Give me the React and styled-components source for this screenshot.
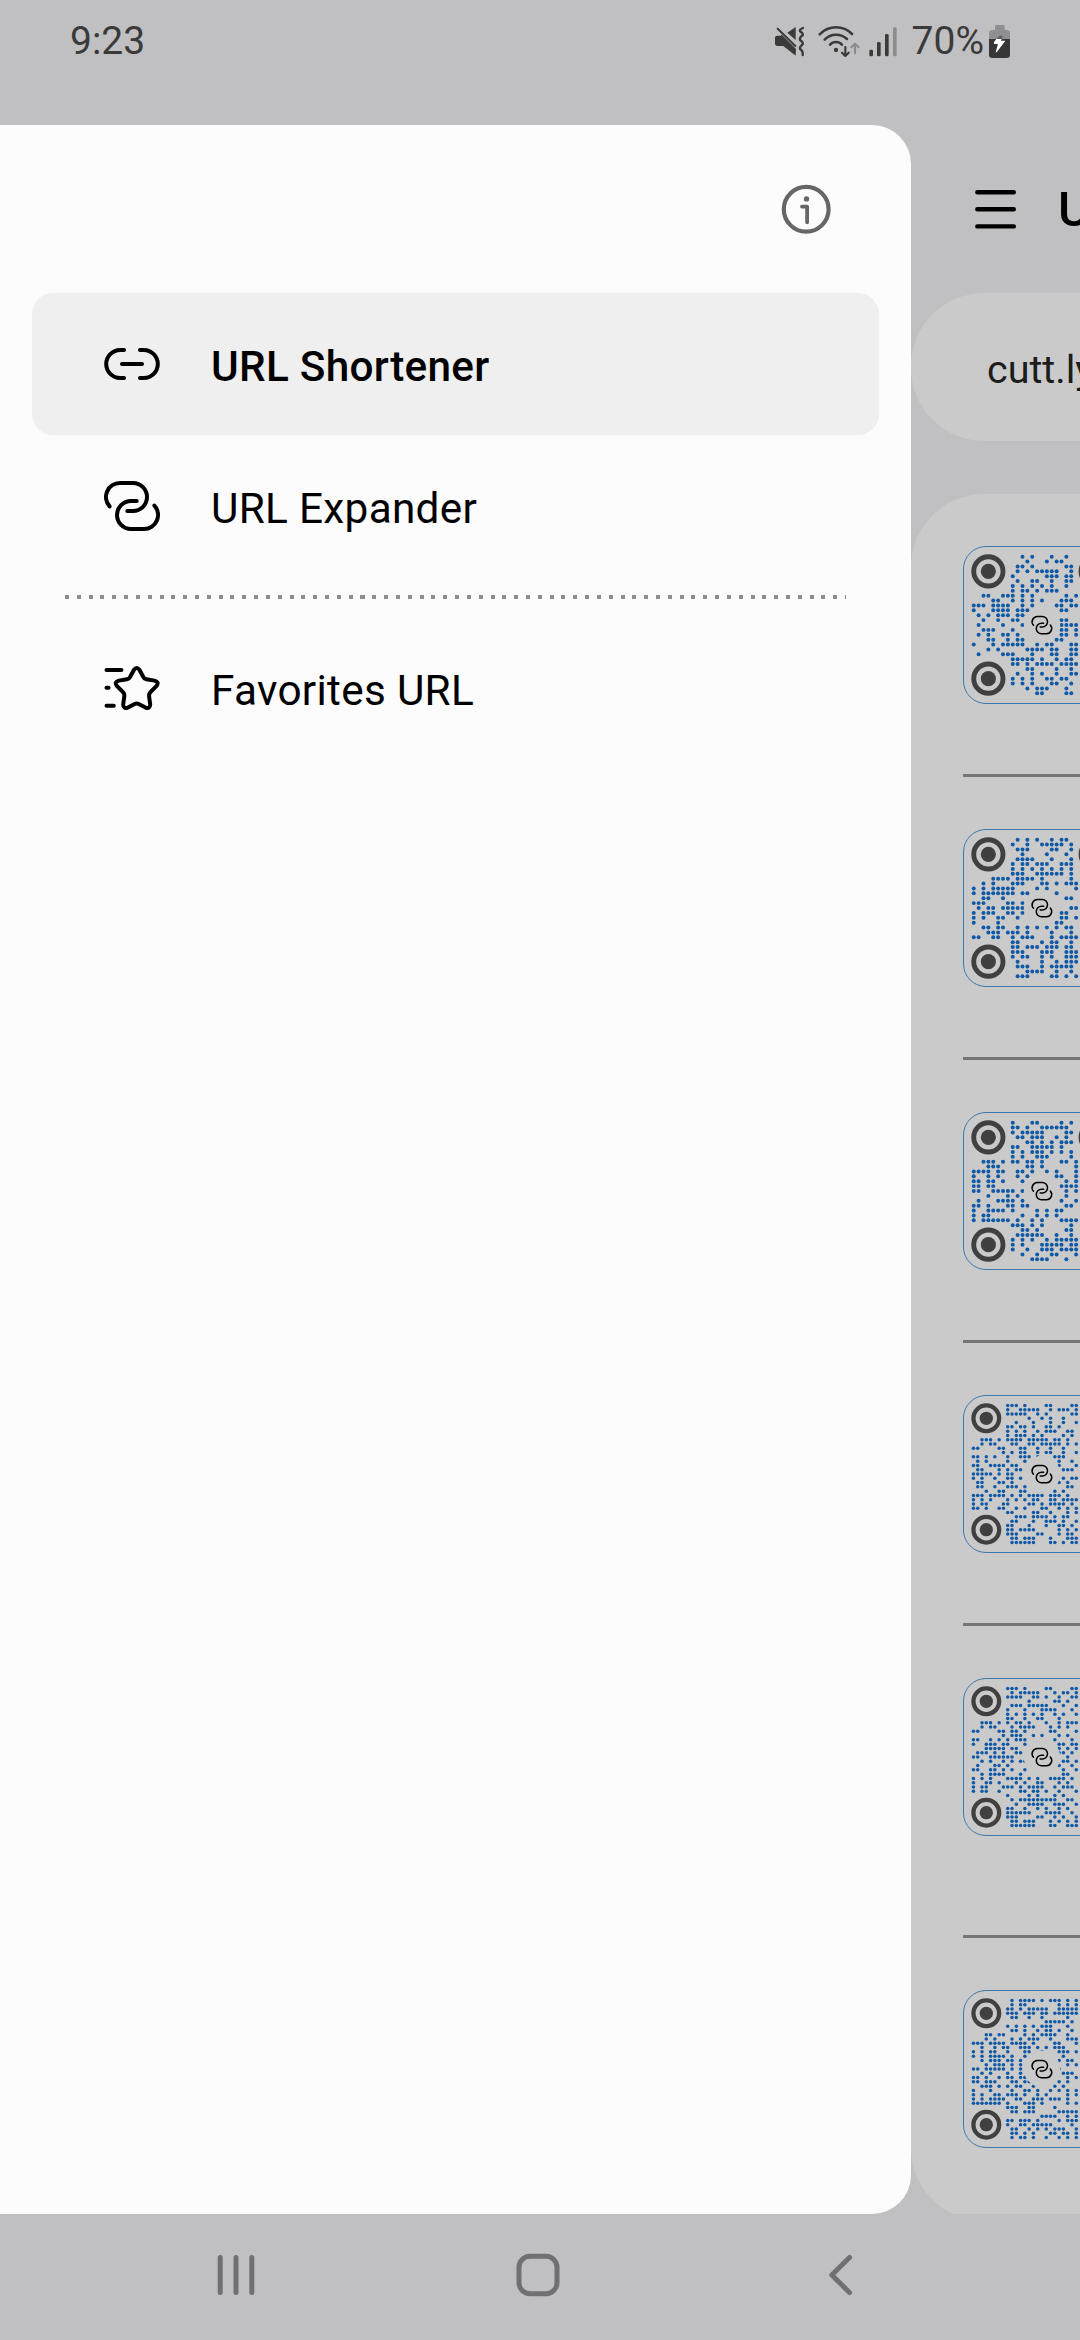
import React from "react";
import styled, { createGlobalStyle } from "styled-components";

const GlobalStyle = createGlobalStyle`
  *, *::before, *::after { box-sizing: border-box; }
  html, body { margin: 0; padding: 0; background: #c0c0c2; }
  body { font-family: Roboto, "Liberation Sans", sans-serif; overflow: hidden; }
  svg { display: block; flex: none; }
`;

const Screen = styled.div`
  display: flex;
  flex-direction: column;
  width: 1080px;
  height: 2340px;
  overflow: hidden;
  background: #c0c0c2;
`;

const StatusBar = styled.header`
  display: flex;
  justify-content: space-between;
  align-items: flex-start;
  flex: none;
  height: 125px;
  padding: 17px 70px 0 70px;
  color: #3a3a3a;
`;

const StatusText = styled.span`
  margin-right: ${(p) => p.$right || 0}px;
  font-size: 39px;
  line-height: 48px;
`;

const StatusIcons = styled.div`
  display: flex;
  align-items: flex-start;
  height: 48px;
`;

const IconSlot = styled.span`
  display: block;
  margin: ${(p) => p.$top}px ${(p) => p.$right}px 0 0;
`;

const Body = styled.div`
  display: flex;
  flex: none;
  height: 2089px;
  overflow: hidden;
`;

const Drawer = styled.nav`
  display: flex;
  flex-direction: column;
  flex: none;
  width: 911px;
  background: #fcfcfc;
  border-radius: 0 39px 39px 0;
`;

const DrawerHeader = styled.div`
  display: flex;
  justify-content: flex-end;
  align-items: center;
  height: 168px;
  padding-right: 80px;
`;

const DrawerItem = styled.a`
  display: flex;
  align-items: center;
  gap: 51px;
  height: 142px;
  margin: 0 32px;
  padding-left: 72px;
  border-radius: 21px;
  background: ${(p) => (p.$active ? "#efefef" : "transparent")};
  color: #000;
  font-size: 42.3px;
  font-weight: ${(p) => (p.$active ? 500 : 400)};
  line-height: 50px;
  letter-spacing: 0.3px;
`;

const ItemLabel = styled.span`
  padding-top: 5px;
`;

const DottedDivider = styled.div`
  height: 4px;
  margin: 18px 65px;
  background: repeating-linear-gradient(90deg, #8d8d8d 0 4px, transparent 4px 11.82px);
`;

const Main = styled.main`
  display: flex;
  flex-direction: column;
  flex: none;
  width: 1080px;
`;

const MainHeader = styled.div`
  display: flex;
  align-items: center;
  gap: 41px;
  flex: none;
  height: 168px;
  padding-left: 64px;
`;

const Title = styled.h1`
  margin: 0;
  padding-top: 2px;
  color: #000;
  font-size: 49px;
  font-weight: 500;
  line-height: 60px;
`;

const ServicePicker = styled.div`
  display: flex;
  align-items: center;
  flex: none;
  height: 148px;
  margin-bottom: 53px;
  padding: 5px 0 0 76px;
  border-radius: 73px;
  background: #cacaca;
  color: #1c1c1c;
  font-size: 39.5px;
  line-height: 48px;
`;

const List = styled.section`
  flex: 1;
  padding-left: 52px;
  border-radius: 73px;
  background: #cacaca;
`;

const ListRow = styled.article`
  height: ${(p) => (p.$tall ? 312 : 283)}px;
  padding-top: 52px;
  border-bottom: ${(p) => (p.$last ? "0" : "3px solid #757575")};
`;

const QrCard = styled.div`
  width: 158px;
  height: 158px;
  border: 1px solid #3f77b0;
  border-radius: 23px;
`;

const NavBar = styled.footer`
  display: flex;
  align-items: flex-start;
  flex: none;
  height: 126px;
  padding: 39px 0 0 215px;
`;

const NavButton = styled.span`
  display: block;
  width: ${(p) => p.$width}px;
`;

/* Dot positions per row of each code; "a-b" is a run of columns. */
const CODES = [
  {
    size: 29,
    rows: "10 12 16 19|11 15 17 18|9 10 12 19 20|9 11 13-17 20|8 15-17 19 20|9 12 13 16 19 20|8 10 12 14 16 19|8 10 11 13 15-17|2 3 6-8 10 12 19 21|4 5 8 10 12 14 18-20|0-2 4-7 10 12 17 18 20 21|0 4-7 9-11 18 19|1 3 5-7 9 10|2 5 8 9 18 19|1 6 10 18-21|2-4 8 18 19 21|1 3 6 7 9 18 19 21|3 4 7 9 10 17 18|0 4 6-10 13 15 16 20 21|3 5 11-14 16 17 20 21|1 6-8 12 16 17 20 21|8-12 14 17 19 20|8 9 11 13-16 18-21|11 12 17 20|9 12 14 17 20 21|8 10 12 15 16 18 19|8 10 12 16 17 20|11 13-15 19|13 14 19 20",
  },
  {
    size: 29,
    rows: "9 11 13 16 18 19|8 11 14-18 20|9-11 16 17 20|10 15 19|9-12 16 20|8 10 11 13-15 18-20|8 10 12 14 16 18 20|8-10 13-18 20|4-7 9-12 14 20|2 4 8-10 14 15 17 19-21|0 2 4-8 13 15 21|0 2-8 10 11 17|2 3 6 19 20|0-2 7 8 10|1 3 4 6-10 20 21|0 2-4 7 8 10 18 19|0 2 5 6 9 18 19 21|0 5 17 18|2 3 5 6 9 11 13 15 17 19 20|3-5 7-9 11 16 20|0 1 4 5 8 10-12 16 18-21|8 9 14 16 17 20|8 9 11-13 15-17 19 20|8-10 14-16 19-21|8 10 11 14 16 19-21|9 14 17 19-21|9-11 14 16-20|11-14 17 20|9-11 16 17 19 21",
  },
  {
    size: 29,
    rows: "8 12 13 18 20|8 9 11 14-19|8 10-14 19 20|9 10 12-14 17 19|11 12 14 16 18-20|8 9 12-16 18|8 10 12-14 16 18 20|8 10 13-15 20|2-4 6 8 9 11 12 14 18 19 21|3-5 11 12 14 21|0-3 5 6 9 10 12 15 17 21|0 3 5 9 11 17 18 21|0 1 3 4 6 10 19 21|0 1 3 4 18-21|0 1 4-8 10 19 21|3 7 9 19|1 5-8 10 18 21|0 1 3 7 8 10 11 19 20|0 3-6 8 13 15 17 18|0 2 3 10 13 15 17|0 2-7 9 12 14 18-21|8-10 12 14 20|10 11 13 19 20|9-14 17 20|8 10 12 15 17-21|8 10 14-18 20 21|8 11 14-16 18-21|10 13 16 17 21|12-15 19",
  },
  {
    size: 33,
    rows: "8-10 12 17 18 23 24|8 11-15 18 20-22 24|8-12 15 17 23 24|13 16 18 21|10 14 18 21 24|8 9 11 12 14 17 18 20|8 10 12 15 17-19 22 23|8 10-12 14 16 21 23|2-4 6 8-11 13-17 19 20 22|2 4 5 9 10 13 14 16-20 22 24|0 1 6 7 11 12 15 18 21|7 9 11 12 15 17 18 21 24|0 1 3 5 8 11-13 15 19-21|1 3 8 12 20 23|0 1 4-7 9 10 20 24|1 2 6 8 10 11 21-23|0-4 6 8 9|0 2 5 8 9 11 21 23 24|1 2 6 7 9 20 22|1 2 5 8-10 12 22 23|3 6 7 11 12 19 21|0-2 4-7 9 11 13-16 18-20 22|0 2 4 8 10 12 14 15 18 19 21-24|0 2 3 7 8 13 14 16 18-21 23|0 1 3 6 7 10 12 16 17 20 22 24|8 9 14 15 18 22 24|10-12 14-17 19 21 22|9 10 14 17-19 21 24|8 9 13 17 20 21 23|8 9 11-14 20 22 24|8-10 15 16 20 22 23|9 10 12-14 18 22-24|9-14 18 19 21 23 24",
  },
  {
    size: 33,
    rows: "8-10 12 17 18 23 24|9 11-15 19 21 22 24|8-11 14 15 17 20 23 24|13 19 20 22|9-11 13-17 21 24|8 12 16-19 23|8 10 12 14 16 19 21 24|8 9 12 15 16 20|2-4 6 8 10 11 13 17 20 22-24|2 4 5 9 11-14 18 20 22|0 1 6 7 9 10 12 18 19 24|7 9-11 14 16 20 22|0 1 4 6 8 10-12 19 23|0 3-5 7 8 12 20 21 23 24|3-7 9 10 20 22 24|1-3 5 7 10 11 20 21 23|0 1 4-9 22|2 4 7 9 11 12 21 22 24|1 5 6 8 20 23|0 1 4 5 7 9 12 21 24|2 4-7 11 21 22|0 2 4 8-11 13 15 18-21 23|0 3 4 6 10 12 15 16 20 22|0 2 3 7-9 11 13-16 19 21-23|0 2 3 6 11 12 14 15 17 20 24|8 13 15 19 21|9 11-19 22 23|10 13-16 19-21 24|8 9 12 15 17 20 22|8-13 17-20 23|8-10 15 16 19 21 24|9 10 12-14 18 20 22 24|9-14 18 19 22-24",
  },
  {
    size: 33,
    rows: "9 11-14 16 18-20 22 24|9 11 12 20 22 24|8 9 11 13-17 20-24|8-10 12-14 16 17 19-24|9 10 13 16 22|17-21 23|8 10 12 14 16-18 22|9 10 12 15 17 18 20 23|3 4 6 7 12 14 16-19 22|3 5 9 11 13-15 18 22-24|0-2 4-7 9-12 14 19 20 24|2 5 7 8 11-13 15 17 19-21|0 2 4 5 8 12 13 16 20-22 24|0 2 4-7 9 12 21|2 4-6 8 9 11 20 22 23|3 5-7 9 11 22 24|0 1 3-7 9 11 20|2 4 8 11 21-23|0 1 3 6 8 9 11 12 22 24|0 1 3-5 9 10 12 13 20 22|2-4 6 8 10 11 14 19 21|0 4 9 12 13 15 18 20 22 24|0 2 5 6 8-10 12 15 17 22 24|0 2 4-7 10 11 14-16 18-20 22|0-6 8 12-14 16 22 24|8-10 13 14 19|9 10 12-14 20-24|16-19 22 24|8 9 11-13 15 20 22-24|8 11 12 14-18 23|9 10 13 15 17 19-21 24|9 10 12 14 18 19 21 22 24|9 11 12 14 17 20 22 24",
  },
];

function columnsOf(row) {
  return row.split(" ").flatMap((part) => {
    const [from, to = from] = part.split("-").map(Number);
    return Array.from({ length: to - from + 1 }, (_, i) => from + i);
  });
}

function ExpandGlyph({ width }) {
  return (
    <g fill="none" stroke="#000" strokeWidth={width} strokeLinecap="round" strokeLinejoin="round">
      <path d="M5.6 28.4A14 14 0 0 1 16 5H29a14 14 0 0 1 0 28H23.3" />
      <path d="M50.4 27.6A14 14 0 0 1 40 51H27a14 14 0 0 1 0-28H32.7" />
    </g>
  );
}

function QrCode({ size, rows }) {
  const margin = 8.3;
  const unit = (158 - margin * 2) / size;
  const near = margin + unit * 3.5;
  const far = 158 - near;
  return (
    <QrCard>
      <svg width="156" height="156" viewBox="1 1 156 156">
        <g fill="#1059a6">
          {rows.split("|").flatMap((row, r) =>
            columnsOf(row).map((c) => (
              <circle
                key={`${r}-${c}`}
                cx={margin + unit * (c + 0.5)}
                cy={margin + unit * (r + 0.5)}
                r={unit * 0.41}
              />
            ))
          )}
        </g>
        <circle cx="79" cy="79" r="18.2" fill="#cacaca" />
        {[[near, near], [near, far], [far, near]].map(([x, y]) => (
          <g key={`${x}-${y}`}>
            <circle cx={x} cy={y} r={unit * 3} fill="none" stroke="#404040" strokeWidth={unit} />
            <circle cx={x} cy={y} r={unit * 1.55} fill="#404040" />
          </g>
        ))}
        <g transform="translate(68.4 68.6) scale(.375)">
          <ExpandGlyph width="4.1" />
        </g>
      </svg>
    </QrCard>
  );
}

const MuteIcon = () => (
  <svg width="30" height="31" viewBox="102 78 90 93">
    <g fill="#3a3a3a">
      <path d="M108 107H124L164 147V167L127 138H108Q102 137 102 131V113Q102 107 108 107Z" />
      <path d="M122 104L164 146V160L116 112Z" />
      <path d="M164 81V120L139 98Z" />
    </g>
    <path d="M110 86L163 138" stroke="#3a3a3a" strokeWidth="6" strokeLinecap="round" />
    <path
      d="M186 84Q175 88 177 94Q187 100 185 106Q175 112 177 120Q187 126 185 133Q175 140 177 147Q187 153 185 165"
      fill="none"
      stroke="#3a3a3a"
      strokeWidth="7"
      strokeLinecap="round"
    />
  </svg>
);

const WifiIcon = () => (
  <svg width="42" height="32" viewBox="231 75 126 96">
    <g fill="none" stroke="#3a3a3a" strokeWidth="7.5" strokeLinecap="round" strokeLinejoin="round">
      <path d="M236 103Q257 82 285 82Q313 82 333 102" />
      <path d="M251 119Q265 104 285 104Q305 104 318 117" />
      <path d="M267 134Q274 126 285 126Q296 126 303 134" />
      <path d="M313 141V167M303 158L313 168L323 158" strokeWidth="6.5" />
      <path d="M342 160V133M331 142L342 131L353 142" stroke="#8c8c8d" strokeWidth="6.5" />
    </g>
    <circle cx="285" cy="150" r="6.5" fill="#3a3a3a" />
  </svg>
);

const SignalIcon = () => (
  <svg width="29" height="30" viewBox="384 80 87 90">
    <g fill="#3a3a3a">
      <rect x="385" y="148" width="11" height="20" rx="4" />
      <rect x="408" y="125" width="11" height="43" rx="4" />
      <rect x="432" y="101" width="11" height="67" rx="4" />
      <rect x="456" y="81" width="11" height="87" rx="4" fill="#8c8c8d" />
    </g>
  </svg>
);

const BatteryIcon = () => (
  <svg width="21" height="33" viewBox="747 75 63 99">
    <path d="M765 90V79Q765 75 769 75H790Q794 75 794 79V90H800Q810 90 810 99V117H747V99Q747 90 757 90Z" fill="#8f8f91" />
    <path d="M747 117H810V165Q810 174 800 174H757Q747 174 747 165Z" fill="#363636" />
    <path d="M779 107H788L785 117H769Z" fill="#5c5c5d" />
    <path d="M769 117H785L783 122H796L770 157H767L774 132H762V126Z" fill="#fff" />
  </svg>
);

const InfoIcon = () => (
  <svg width="50" height="50" viewBox="0 0 50 50" fill="none" stroke="#666" strokeLinecap="round" strokeLinejoin="round">
    <circle cx="25.2" cy="25.3" r="22.4" strokeWidth="4.2" />
    <path d="M21 22.6H26.1V38.3" strokeWidth="3.8" />
    <circle cx="25.5" cy="14.9" r="2.7" fill="#666" stroke="none" />
  </svg>
);

const MenuIcon = () => (
  <svg width="42" height="40" viewBox="0 0 42 40" stroke="#000" strokeWidth="4.4" strokeLinecap="round">
    <path d="M2.3 3.3H38.8M2.3 20.3H38.8M2.3 37.4H38.8" />
  </svg>
);

const LinkIcon = () => (
  <svg width="56" height="56" viewBox="0 0 56 56" fill="none" stroke="#000" strokeWidth="4" strokeLinecap="round">
    <path d="M20 14H16.2A14 14 0 0 0 16.2 42H20M36 14H39.8A14 14 0 0 1 39.8 42H36M18 28H38" />
  </svg>
);

const ExpandIcon = () => (
  <svg width="56" height="56" viewBox="0 0 56 56">
    <ExpandGlyph width="4" />
  </svg>
);

const FavoritesIcon = () => (
  <svg width="56" height="56" viewBox="0 0 56 56" fill="none" stroke="#000" strokeWidth="4" strokeLinecap="round" strokeLinejoin="round">
    <path d="M2.5 10H17.4M2.5 27.7H4.6M2.5 45.8H9.8" />
    <path d="M26.2 16.8L30 9.8Q32.7 6.3 35.4 9.8L39.2 16.8Q40.2 18.8 42.3 19.2L50.5 20.6Q55.4 22 52.6 25.8L46.4 32.2Q44.8 34 45.1 36.2L46.2 44.5Q46 49.3 41.5 47.6L34.7 44Q32.7 43 30.7 44L23.9 47.6Q19.4 49.3 19.2 44.5L20.3 36.2Q20.6 34 19 32.2L12.8 25.8Q10 22 14.9 20.6L23.1 19.2Q25.2 18.8 26.2 16.8Z" />
  </svg>
);

const navStroke = { fill: "none", stroke: "#707072", strokeWidth: 5, strokeLinecap: "round", strokeLinejoin: "round" };

const RecentsIcon = () => (
  <svg width="42" height="46" viewBox="0 0 42 46" {...navStroke}>
    <path d="M5.2 4.5V39.5M21 4.5V39.5M36.8 4.5V39.5" />
  </svg>
);

const HomeIcon = () => (
  <svg width="46" height="46" viewBox="0 0 46 46" {...navStroke}>
    <rect x="5" y="3.2" width="38" height="37.6" rx="11" />
  </svg>
);

const BackIcon = () => (
  <svg width="30" height="46" viewBox="0 0 30 46" {...navStroke}>
    <path d="M24.5 4.5L6.8 22L24.5 39.5" />
  </svg>
);

export default function App() {
  return (
    <Screen>
      <GlobalStyle />
      <StatusBar>
        <StatusText>9:23</StatusText>
        <StatusIcons>
          <IconSlot $top={9} $right={13}><MuteIcon /></IconSlot>
          <IconSlot $top={8} $right={9}><WifiIcon /></IconSlot>
          <IconSlot $top={10} $right={14}><SignalIcon /></IconSlot>
          <StatusText $right={5}>70%</StatusText>
          <IconSlot $top={8} $right={0}><BatteryIcon /></IconSlot>
        </StatusIcons>
      </StatusBar>

      <Body>
        <Drawer>
          <DrawerHeader>
            <InfoIcon />
          </DrawerHeader>
          <DrawerItem $active>
            <LinkIcon />
            <ItemLabel>URL Shortener</ItemLabel>
          </DrawerItem>
          <DrawerItem>
            <ExpandIcon />
            <ItemLabel>URL Expander</ItemLabel>
          </DrawerItem>
          <DottedDivider />
          <DrawerItem>
            <FavoritesIcon />
            <ItemLabel>Favorites URL</ItemLabel>
          </DrawerItem>
        </Drawer>

        <Main>
          <MainHeader>
            <MenuIcon />
            <Title>URL Shortener</Title>
          </MainHeader>
          <ServicePicker>cutt.ly</ServicePicker>
          <List>
            {CODES.map((code, i) => (
              <ListRow key={i} $tall={i === 4} $last={i === CODES.length - 1}>
                <QrCode {...code} />
              </ListRow>
            ))}
          </List>
        </Main>
      </Body>

      <NavBar>
        <NavButton $width={299}><RecentsIcon /></NavButton>
        <NavButton $width={311}><HomeIcon /></NavButton>
        <NavButton $width={30}><BackIcon /></NavButton>
      </NavBar>
    </Screen>
  );
}
